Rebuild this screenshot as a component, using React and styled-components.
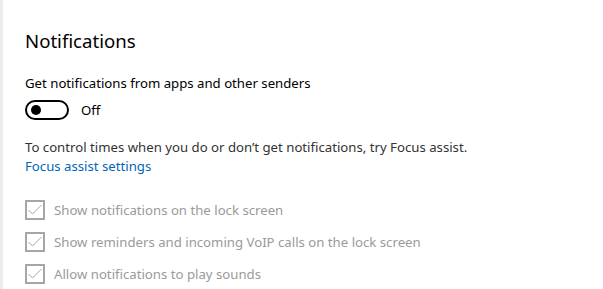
import styled, { createGlobalStyle } from "styled-components";

const GlobalStyle = createGlobalStyle`
  html, body {
    margin: 0;
    padding: 0;
    background: #ffffff;
  }
  body {
    font-family: "Noto Sans", "Open Sans", sans-serif;
  }
`;

const Page = styled.div`
  width: 603px;
  height: 289px;
  box-sizing: border-box;
  border-left: 3px solid #ececec;
  padding: 27px 0 0 22px;
  overflow: hidden;
`;

const Heading = styled.h1`
  margin: 0 0 18px;
  font-size: 18.6px;
  line-height: 28px;
  font-weight: 400;
  color: #000;
`;

const Label = styled.div`
  font-size: 13.2px;
  line-height: 20px;
  color: #000;
  margin-bottom: 7px;
`;

const ToggleRow = styled.div`
  display: flex;
  align-items: center;
  gap: 12px;
  height: 20px;
  margin-bottom: 18px;
`;

const Track = styled.div`
  width: 44px;
  height: 20px;
  box-sizing: border-box;
  border: 2px solid #000;
  border-radius: 10px;
  display: flex;
  align-items: center;
  padding-left: 4px;
`;

const Knob = styled.span`
  width: 10px;
  height: 10px;
  border-radius: 50%;
  background: #000;
`;

const ToggleText = styled.span`
  font-size: 13.2px;
  color: #000;
`;

const Description = styled.p`
  margin: 0;
  font-size: 13.2px;
  line-height: 19px;
  color: #333;
`;

const Link = styled.a`
  display: block;
  font-size: 13.2px;
  line-height: 19px;
  color: #0067b8;
  text-decoration: none;
  margin-bottom: 24px;
`;

const CheckList = styled.div`
  display: flex;
  flex-direction: column;
  gap: 12px;
`;

const CheckRow = styled.label`
  display: flex;
  align-items: center;
  gap: 9px;
  height: 20px;
  font-size: 13.2px;
  color: #9a9a9a;
`;

const Box = styled.span`
  width: 20px;
  height: 20px;
  box-sizing: border-box;
  border: 2px solid #a6a6a6;
  display: flex;
  align-items: center;
  justify-content: center;
`;

function CheckBox() {
  return (
    <Box>
      <svg width="16" height="16" viewBox="0 0 16 16">
        <path d="M1.5 8 L5.5 12 L14.5 3" fill="none" stroke="#a6a6a6" strokeWidth="1" />
      </svg>
    </Box>
  );
}

const options = [
  "Show notifications on the lock screen",
  "Show reminders and incoming VoIP calls on the lock screen",
  "Allow notifications to play sounds",
];

export default function App() {
  return (
    <>
      <GlobalStyle />
      <Page>
        <Heading>Notifications</Heading>
        <Label>Get notifications from apps and other senders</Label>
        <ToggleRow>
          <Track>
            <Knob />
          </Track>
          <ToggleText>Off</ToggleText>
        </ToggleRow>
        <Description>
          To control times when you do or don’t get notifications, try Focus assist.
        </Description>
        <Link href="#">Focus assist settings</Link>
        <CheckList>
          {options.map((text) => (
            <CheckRow key={text}>
              <CheckBox />
              {text}
            </CheckRow>
          ))}
        </CheckList>
      </Page>
    </>
  );
}
